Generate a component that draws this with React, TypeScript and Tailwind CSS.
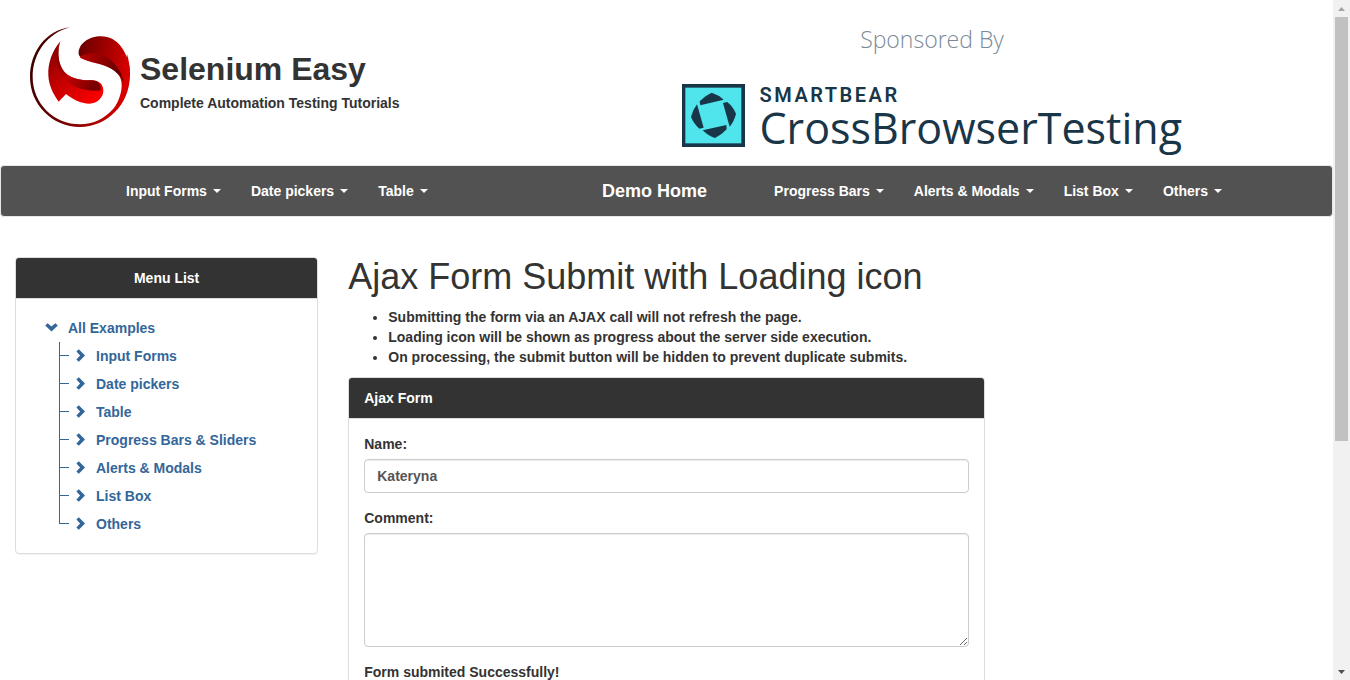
import React from "react";

const leftMenu = ["Input Forms", "Date pickers", "Table"];
const rightMenu = ["Progress Bars", "Alerts & Modals", "List Box", "Others"];
const examples = [
  "Input Forms",
  "Date pickers",
  "Table",
  "Progress Bars & Sliders",
  "Alerts & Modals",
  "List Box",
  "Others",
];

function SeleniumLogo() {
  return (
    <svg viewBox="0 0 300 300" className="size-[100px] shrink-0" role="img" aria-label="Selenium Easy logo">
      <defs>
        <linearGradient id="ring" x1="0" y1="0.2" x2="1" y2="0.4">
          <stop offset="0" stopColor="#3a0000" />
          <stop offset="0.5" stopColor="#7a0000" />
          <stop offset="1" stopColor="#d40000" />
        </linearGradient>
        <linearGradient id="top" x1="0" y1="0.2" x2="1" y2="0.5">
          <stop offset="0" stopColor="#6a0000" />
          <stop offset="1" stopColor="#dc0000" />
        </linearGradient>
        <linearGradient id="fold" x1="0" y1="0.2" x2="1" y2="0.5">
          <stop offset="0" stopColor="#b80000" />
          <stop offset="0.55" stopColor="#8a0000" />
          <stop offset="1" stopColor="#5a0000" />
        </linearGradient>
        <linearGradient id="tail" x1="0" y1="0" x2="0.9" y2="1">
          <stop offset="0" stopColor="#7c0000" />
          <stop offset="0.5" stopColor="#c80000" />
          <stop offset="1" stopColor="#ff0000" />
        </linearGradient>
        <linearGradient id="shade" x1="0" y1="0" x2="1" y2="0.7">
          <stop offset="0" stopColor="#5a0000" />
          <stop offset="0.5" stopColor="#c40000" />
          <stop offset="1" stopColor="#780000" />
        </linearGradient>
      </defs>
      <path
        d="M120 1C48 10 0 75 0 150c0 83 67 150 150 150 76 0 150-62 150-158 0-20-4-45-9-60l-8 50c8 90-53 160-133 160C72 292 8 230 8 150 8 77 54 18 120 1Z"
        fill="url(#ring)"
      />
      <path
        d="M146 82c-2-30 28-54 68-54 48 0 76 45 84 88 6 34-6 85-42 123 18-33 28-74 8-97-25-29-59-32-92-42-13-4-24-9-26-18Z"
        fill="url(#top)"
      />
      <path d="M149 90c27-16 62-15 88 5 22 16 42 45 45 77-5-18-10-25-18-32-25-24-57-28-90-38-12-4-20-7-25-12Z" fill="url(#fold)" />
      <path
        d="M91 43c-24 28-38 67-36 102 1 30 15 57 31 79l22-23c18 15 45 29 70 29 25-1 42-18 42-40 0-18-14-31-36-30-45 1-80-12-92-44-9-23-9-50-1-73Z"
        fill="url(#tail)"
      />
      <path d="M91 43c-12 31-12 70 1 98 18 31 55 52 118 50 6-12-1-31-26-31-45 1-80-12-92-44-9-23-9-50-1-73Z" fill="url(#shade)" />
    </svg>
  );
}

function SponsorMark() {
  return (
    <svg viewBox="0 0 189 189" className="size-[63px] shrink-0" role="img" aria-label="SmartBear logo">
      <rect width="189" height="189" fill="#183648" />
      <rect x="10" y="11" width="168" height="167" fill="#50e5ec" />
      <g fill="#183648">
        <path d="M55 64 53 52Q68 35 89 26 109 32 125 47Z" />
        <path d="M123 57 136 54Q154 69 162 89 157 111 143 128Z" />
        <path d="M62 139 133 123 134 136Q119 153 99 162 79 156 62 139Z" />
        <path d="M45 61 65 131 52 134Q35 119 27 99 31 79 45 61Z" />
      </g>
    </svg>
  );
}

function Caret() {
  return (
    <svg viewBox="0 0 8 4" className="ml-[6px] h-1 w-2" aria-hidden="true">
      <path d="M0 0h8L4 4Z" fill="currentColor" />
    </svg>
  );
}

function NavLinks({ items }: { items: string[] }) {
  return (
    <ul className="flex">
      {items.map((item) => (
        <li key={item}>
          <a href="#" className="flex items-center px-[15px] py-[15px] leading-5">
            {item}
            <Caret />
          </a>
        </li>
      ))}
    </ul>
  );
}

function Chevron({ down = false }: { down?: boolean }) {
  return down ? (
    <svg viewBox="0 0 13 10" className="h-[10px] w-[13px]" aria-hidden="true">
      <path d="M.2 2.6 2.6.2 6.5 3.6 10.4.2 12.8 2.6 6.5 8.4Z" fill="currentColor" />
    </svg>
  ) : (
    <svg viewBox="0 0 10 14" className="h-[14px] w-[10px]" aria-hidden="true">
      <path d="M2.8.2.4 2.6 4.1 6.5.4 10.4 2.8 12.8 9 6.5Z" fill="currentColor" />
    </svg>
  );
}

function Scrollbar() {
  return (
    <div className="flex w-[17px] shrink-0 flex-col items-center bg-[#f1f1f1]" aria-hidden="true">
      <div className="flex h-[17px] shrink-0 items-center">
        <svg viewBox="0 0 7 4" className="h-1 w-[7px]">
          <path d="M0 4h7L3.5 0Z" fill="#a3a3a3" />
        </svg>
      </div>
      <div className="flex w-[13px] grow flex-col">
        <div className="h-[65.6%] bg-[#c1c1c1]" />
      </div>
      <div className="flex h-[17px] shrink-0 items-center">
        <svg viewBox="0 0 7 4" className="h-1 w-[7px]">
          <path d="M0 0h7L3.5 4Z" fill="#505050" />
        </svg>
      </div>
    </div>
  );
}

export default function App() {
  const field =
    "block w-full rounded border border-[#ccc] bg-white px-3 py-[6px] text-[#555] shadow-[inset_0_1px_1px_rgba(0,0,0,0.075)] outline-none";
  return (
    <div className="flex h-screen bg-white font-['Liberation_Sans',Arial,sans-serif] text-sm leading-5 font-bold text-[#333]">
      <div className="min-w-0 flex-1 overflow-hidden">
        <header className="grid h-[165px] grid-cols-2">
          <div className="flex items-start pt-[27px] pl-[30px]">
            <SeleniumLogo />
            <div className="pt-[22px] pl-[10px]">
              <h1 className="text-[32px] leading-10">Selenium Easy</h1>
              <p className="pt-1">Complete Automation Testing Tutorials</p>
            </div>
          </div>
          <a
            href="#"
            className="flex w-[516px] flex-col pl-[15px] font-['Open_Sans',sans-serif] text-[#183648]"
          >
            <span className="pt-[21px] text-center text-[23px] leading-9 font-light text-[#7b8a97]">Sponsored By</span>
            <span className="flex pt-[27px]">
              <SponsorMark />
              <span className="flex flex-col pl-[15px]">
                <span className="font-['Roboto',sans-serif] text-xl leading-[22px] font-semibold tracking-[0.125em]">
                  SMARTBEAR
                </span>
                <span className="text-[43px] leading-[43px] font-normal">CrossBrowserTesting</span>
              </span>
            </span>
          </a>
        </header>

        <nav className="grid grid-cols-[476px_1fr_auto] rounded border border-[#e7e7e7] bg-[#525252] pr-[95px] pl-[110px] text-white">
          <NavLinks items={leftMenu} />
          <a href="#" className="px-[15px] py-[15px] text-lg leading-5">
            Demo Home
          </a>
          <NavLinks items={rightMenu} />
        </nav>

        <div className="grid grid-cols-4 pt-10">
          <aside className="px-[15px]">
            <section className="rounded border border-[#ddd] shadow-[0_1px_1px_rgba(0,0,0,0.05)]">
              <h2 className="rounded-t-[3px] border-b border-[#ddd] bg-[#333] py-[10px] text-center text-white">
                Menu List
              </h2>
              <div className="py-[15px] pl-[29px] text-[#336699]">
                <a href="#" className="flex h-7 items-center gap-[10px]">
                  <Chevron down />
                  All Examples
                </a>
                <ul className="pl-[14px]">
                  {examples.map((item) => (
                    <li key={item} className="group flex h-7">
                      <span className="flex w-[10px] flex-col" aria-hidden="true">
                        <span className="h-[14px] border-b border-l border-[#336699]" />
                        <span className="h-[14px] border-l border-[#336699] group-last:border-transparent" />
                      </span>
                      <a href="#" className="flex items-center gap-[10px] pl-[7px]">
                        <Chevron />
                        {item}
                      </a>
                    </li>
                  ))}
                </ul>
              </div>
            </section>
          </aside>

          <main className="col-span-2 px-[15px]">
            <h1 className="mb-[10px] text-4xl leading-10 font-medium">Ajax Form Submit with Loading icon</h1>
            <ul className="mb-[10px] list-disc pl-10">
              <li>Submitting the form via an AJAX call will not refresh the page.</li>
              <li>Loading icon will be shown as progress about the server side execution.</li>
              <li>On processing, the submit button will be hidden to prevent duplicate submits.</li>
            </ul>
            <section className="rounded border border-[#ddd] shadow-[0_1px_1px_rgba(0,0,0,0.05)]">
              <h2 className="rounded-t-[3px] border-b border-[#ddd] bg-[#333] px-[15px] py-[10px] text-white">
                Ajax Form
              </h2>
              <form className="flex flex-col gap-[15px] p-[15px]">
                <div>
                  <label htmlFor="name" className="mb-[5px] block">
                    Name:
                  </label>
                  <input id="name" type="text" defaultValue="Kateryna" className={field} />
                </div>
                <div>
                  <label htmlFor="comment" className="mb-[5px] block">
                    Comment:
                  </label>
                  <textarea id="comment" rows={5} className={field} />
                </div>
                <p>Form submited Successfully!</p>
              </form>
            </section>
          </main>
        </div>
      </div>
      <Scrollbar />
    </div>
  );
}
